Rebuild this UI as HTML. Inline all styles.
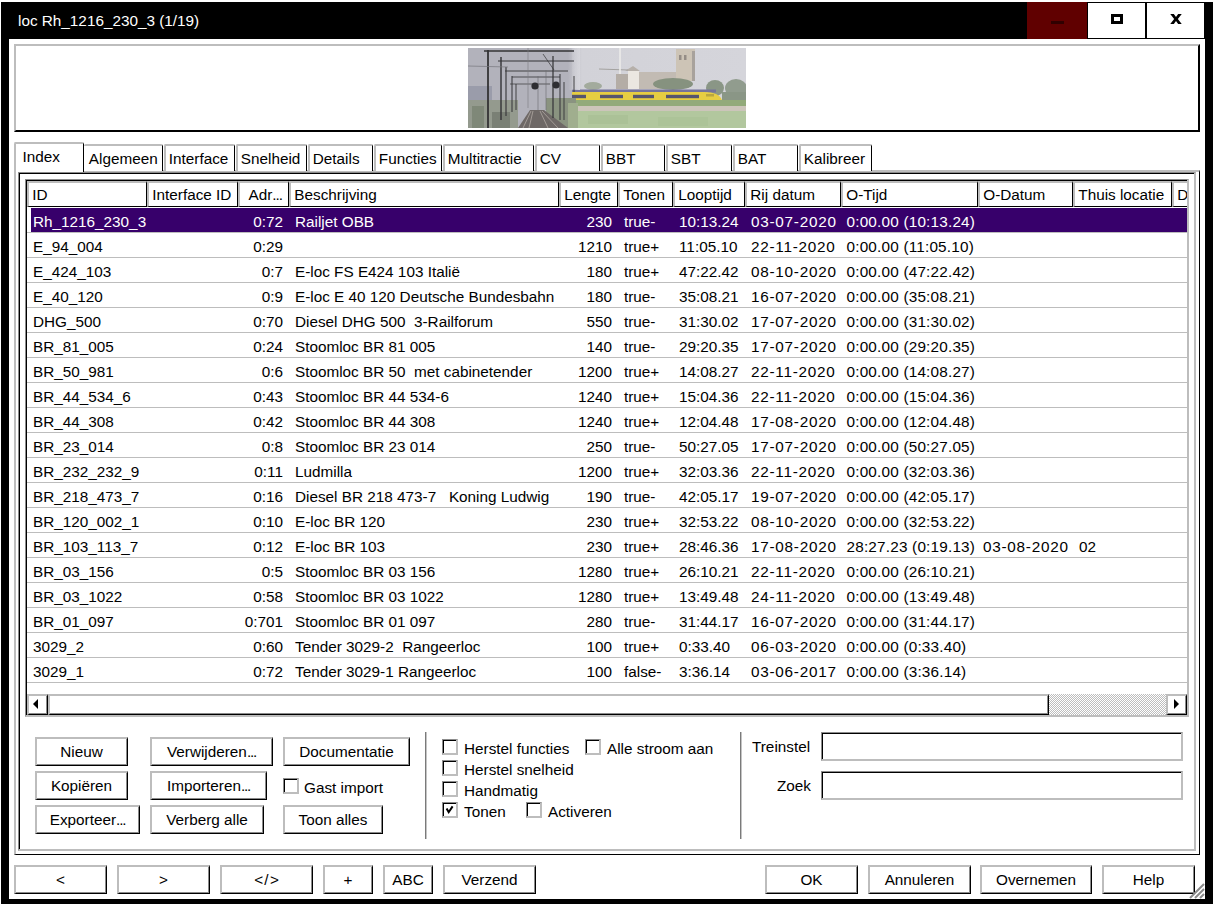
<!DOCTYPE html>
<html><head><meta charset="utf-8"><style>
html,body{margin:0;padding:0;width:1213px;height:904px;overflow:hidden;background:#fff;position:relative}
div{position:absolute}
.t{font-family:"Liberation Sans",sans-serif;font-size:15.3px;line-height:18px;white-space:pre;color:#000}
</style></head><body>
<div style="left:0px;top:0px;width:1213px;height:2px;background:#fff"></div>
<div style="left:1px;top:2px;width:1212px;height:902px;background:#000"></div>
<div style="left:9px;top:39px;width:1196px;height:860px;background:#fff"></div>
<div class="t" style="left:18px;top:12.2px;color:#fff;">loc Rh_1216_230_3 (1/19)</div>
<div style="left:1027px;top:2px;width:60px;height:37px;background:#600000"></div>
<div style="left:1051px;top:21px;width:13px;height:3px;background:#300000"></div>
<div style="left:1087px;top:2px;width:59px;height:37px;background:#fff;border:1px solid #000;box-sizing:border-box"></div>
<div style="left:1111px;top:14px;width:12px;height:10px;border:3px solid #000;box-sizing:border-box"></div>
<div style="left:1146px;top:2px;width:59px;height:37px;background:#fff;border:1px solid #000;box-sizing:border-box"></div>
<svg style="position:absolute;left:1169.7px;top:13.9px" width="12" height="10" viewBox="0 0 11.5 10"><path d="M0 0 L3.6 0 L5.75 3 L7.9 0 L11.5 0 L7.6 5 L11.5 10 L7.9 10 L5.75 7 L3.6 10 L0 10 L3.9 5Z" fill="#000"/></svg>
<div style="left:14px;top:44px;width:1186px;height:88px;border-top:2px solid #bdbdbd;border-left:2px solid #bdbdbd;border-right:2px solid #000;border-bottom:2px solid #000;box-sizing:border-box"></div>
<div style="left:468px;top:48px;width:278px;height:80px;overflow:hidden"><svg width="278" height="80" viewBox="0 0 278 80" style="display:block">
<defs>
<linearGradient id="sk" x1="0" x2="1" y1="0" y2="0"><stop offset="0" stop-color="#adadb5"/><stop offset="0.36" stop-color="#b3b3bb"/><stop offset="0.41" stop-color="#d2d2d8"/><stop offset="1" stop-color="#d5d5db"/></linearGradient>
<linearGradient id="fade" x1="0" x2="1" y1="0" y2="0"><stop offset="0" stop-color="#d5d5db" stop-opacity="0"/><stop offset="1" stop-color="#d5d5db" stop-opacity="1"/></linearGradient>
<filter id="bl" x="-5%" y="-5%" width="110%" height="110%"><feGaussianBlur stdDeviation="0.7"/></filter>
</defs>
<rect width="278" height="80" fill="url(#sk)"/>
<g filter="url(#bl)">
<!-- right scene -->
<rect x="170" y="24" width="40" height="17" fill="#c2bbb3"/>
<rect x="208" y="1" width="19" height="32" fill="#cdc4b6"/>
<rect x="211" y="7" width="2.5" height="5" fill="#958d86"/><rect x="216" y="7" width="2.5" height="5" fill="#958d86"/>
<rect x="224" y="3" width="3" height="30" fill="#a8a29c"/>
<rect x="160" y="23" width="11" height="18" fill="#ebe7e1"/>
<path d="M157 23 L165 18 L172 23Z" fill="#b6b0aa"/>
<path d="M131 21 L160 22" stroke="#a3a19f" stroke-width="1"/>
<path d="M152 0 L152 28" stroke="#ecebea" stroke-width="1.6"/>
<rect x="148" y="26" width="12" height="15" fill="#b4ada6"/>
<ellipse cx="205" cy="36" rx="20" ry="6" fill="#86927f"/>
<ellipse cx="247" cy="40" rx="9" ry="8" fill="#8a9686"/>
<ellipse cx="268" cy="40" rx="11" ry="9" fill="#919c8e"/>
<ellipse cx="125" cy="38" rx="9" ry="4" fill="#a3ab9d"/>
<!-- train -->
<rect x="96" y="41.5" width="152" height="3" fill="#74739a"/>
<path d="M96 44 L236 44 Q251 44 254 52 L96 52Z" fill="#e6cd42"/>
<rect x="96" y="46.8" width="22" height="3.4" fill="#55546e"/>
<rect x="132" y="46.8" width="23" height="3.4" fill="#55546e"/>
<rect x="165" y="46.8" width="21" height="3.4" fill="#55546e"/>
<rect x="198" y="46.8" width="33" height="3.4" fill="#55546e"/>
<rect x="238" y="46" width="8" height="2.5" fill="#b9a640"/>
<rect x="254" y="44" width="24" height="9" fill="#8a9686"/>
<!-- fields -->
<rect x="96" y="52" width="182" height="6" fill="#92aa7a"/>
<rect x="96" y="58" width="182" height="5" fill="#ccc5ba"/>
<rect x="96" y="63" width="182" height="17" fill="#b2c79e"/>
<rect x="120" y="67" width="40" height="9" fill="#a6bd92" opacity="0.6"/>
<rect x="190" y="69" width="50" height="9" fill="#a8bf94" opacity="0.6"/>
<!-- left railway part -->
<rect x="0" y="0" width="104" height="80" fill="#b2b2bb"/>
<rect x="100" y="0" width="12" height="42" fill="url(#fade)"/>
<rect x="0" y="38" width="24" height="14" fill="#9a9caa"/>
<rect x="0" y="52" width="50" height="28" fill="#949a8e"/>
<rect x="4" y="58" width="12" height="22" fill="#7f8878"/>
<rect x="24" y="64" width="18" height="16" fill="#7a8074"/>
<rect x="78" y="50" width="30" height="30" fill="#8a9380"/>
<rect x="100" y="55" width="10" height="25" fill="#a0ae8e"/>
<path d="M50 80 L62 62 L76 62 L100 80Z" fill="#6e6866"/>
<path d="M55 80 L63 63 M61 80 L65 63 M80 80 L72 63 M90 80 L74 63" stroke="#b0a8a2" stroke-width="0.8"/>
<g stroke="#333336" fill="none">
<path d="M20 2 L20 80" stroke-width="1.8"/>
<path d="M33 9 L33 72" stroke-width="1.4"/>
<path d="M38 19 L38 68" stroke-width="1.1"/>
<path d="M44 28 L44 64" stroke-width="1"/>
<path d="M48 36 L48 62" stroke-width="0.9"/>
<path d="M85 8 L85 70" stroke-width="1.2"/>
<path d="M92 26 L92 72" stroke-width="1"/>
<path d="M96 34 L96 72" stroke-width="0.9"/>
<path d="M106 28 L106 44" stroke-width="0.9"/>
<path d="M16 3 L106 3" stroke-width="1.4"/>
<path d="M30 13 L106 13" stroke-width="1.2"/>
<path d="M37 23 L100 23" stroke-width="0.9"/>
<path d="M44 29 L92 29" stroke-width="0.8"/>
<path d="M42 36 L82 36" stroke-width="0.7"/>
<path d="M75 6 L86 22" stroke-width="0.7"/>
<path d="M60 0 L60 60" stroke-width="0.6" stroke="#7a7a80"/>
<path d="M70 28 L70 62 M78 22 L78 62" stroke-width="0.6" stroke="#6a6a70"/>
</g>
<path d="M0 18 L40 19" stroke="#75757c" stroke-width="0.7"/>
<circle cx="67" cy="38" r="3.6" fill="#2e2e30"/>
<circle cx="88" cy="37" r="3.6" fill="#2e2e30"/>
</g>
</svg>
</div>
<div style="left:14px;top:170px;width:1186px;height:685px;border-top:2px solid #bdbdbd;border-left:2px solid #bdbdbd;border-right:1px solid #000;border-bottom:1px solid #000;box-sizing:border-box"></div>
<div style="left:18px;top:172px;width:1178px;height:679px;border-top:1px solid #8c8c8c;border-left:1px solid #8c8c8c;border-right:2px solid #bdbdbd;border-bottom:2px solid #bdbdbd;box-sizing:border-box;box-shadow:inset 1px 1px 0 #000;"></div>
<div style="left:84px;top:144px;width:79px;height:27px;border-top:2px solid #bdbdbd;border-left:0px solid #bdbdbd;border-right:1px solid #000;box-sizing:border-box;border-top-left-radius:2px;border-top-right-radius:2px;background:#fff"></div>
<div class="t" style="left:88.8px;top:149.8px;">Algemeen</div>
<div style="left:164px;top:144px;width:71px;height:27px;border-top:2px solid #bdbdbd;border-left:2px solid #bdbdbd;border-right:1px solid #000;box-sizing:border-box;border-top-left-radius:2px;border-top-right-radius:2px;background:#fff"></div>
<div class="t" style="left:168.8px;top:149.8px;">Interface</div>
<div style="left:236px;top:144px;width:71px;height:27px;border-top:2px solid #bdbdbd;border-left:2px solid #bdbdbd;border-right:1px solid #000;box-sizing:border-box;border-top-left-radius:2px;border-top-right-radius:2px;background:#fff"></div>
<div class="t" style="left:240.8px;top:149.8px;">Snelheid</div>
<div style="left:308px;top:144px;width:65px;height:27px;border-top:2px solid #bdbdbd;border-left:2px solid #bdbdbd;border-right:1px solid #000;box-sizing:border-box;border-top-left-radius:2px;border-top-right-radius:2px;background:#fff"></div>
<div class="t" style="left:312.8px;top:149.8px;">Details</div>
<div style="left:374px;top:144px;width:68px;height:27px;border-top:2px solid #bdbdbd;border-left:2px solid #bdbdbd;border-right:1px solid #000;box-sizing:border-box;border-top-left-radius:2px;border-top-right-radius:2px;background:#fff"></div>
<div class="t" style="left:378.8px;top:149.8px;">Functies</div>
<div style="left:443px;top:144px;width:91px;height:27px;border-top:2px solid #bdbdbd;border-left:2px solid #bdbdbd;border-right:1px solid #000;box-sizing:border-box;border-top-left-radius:2px;border-top-right-radius:2px;background:#fff"></div>
<div class="t" style="left:447.8px;top:149.8px;">Multitractie</div>
<div style="left:535px;top:144px;width:65px;height:27px;border-top:2px solid #bdbdbd;border-left:2px solid #bdbdbd;border-right:1px solid #000;box-sizing:border-box;border-top-left-radius:2px;border-top-right-radius:2px;background:#fff"></div>
<div class="t" style="left:539.8px;top:149.8px;">CV</div>
<div style="left:601px;top:144px;width:64px;height:27px;border-top:2px solid #bdbdbd;border-left:2px solid #bdbdbd;border-right:1px solid #000;box-sizing:border-box;border-top-left-radius:2px;border-top-right-radius:2px;background:#fff"></div>
<div class="t" style="left:605.8px;top:149.8px;">BBT</div>
<div style="left:666px;top:144px;width:66px;height:27px;border-top:2px solid #bdbdbd;border-left:2px solid #bdbdbd;border-right:1px solid #000;box-sizing:border-box;border-top-left-radius:2px;border-top-right-radius:2px;background:#fff"></div>
<div class="t" style="left:670.8px;top:149.8px;">SBT</div>
<div style="left:733px;top:144px;width:65px;height:27px;border-top:2px solid #bdbdbd;border-left:2px solid #bdbdbd;border-right:1px solid #000;box-sizing:border-box;border-top-left-radius:2px;border-top-right-radius:2px;background:#fff"></div>
<div class="t" style="left:737.8px;top:149.8px;">BAT</div>
<div style="left:799px;top:144px;width:73px;height:27px;border-top:2px solid #bdbdbd;border-left:2px solid #bdbdbd;border-right:1px solid #000;box-sizing:border-box;border-top-left-radius:2px;border-top-right-radius:2px;background:#fff"></div>
<div class="t" style="left:803.8px;top:149.8px;">Kalibreer</div>
<div style="left:14px;top:142px;width:70px;height:30px;border-top:2px solid #bdbdbd;border-left:2px solid #bdbdbd;border-right:1px solid #000;box-sizing:border-box;border-top-left-radius:2px;border-top-right-radius:2px;background:#fff"></div>
<div class="t" style="left:22.5px;top:148px;">Index</div>
<div style="left:25px;top:179px;width:1164px;height:538px;border-top:1px solid #8c8c8c;border-left:1px solid #8c8c8c;border-right:2px solid #bdbdbd;border-bottom:2px solid #bdbdbd;box-sizing:border-box;box-shadow:inset 1px 1px 0 #000;background:#fff;"></div>
<div style="left:27px;top:181px;width:1160px;height:27px;overflow:hidden">
<div style="left:0px;top:0px;width:120px;height:26px;border-top:2px solid #bdbdbd;border-left:2px solid #bdbdbd;border-right:1px solid #000;border-bottom:1px solid #000;box-sizing:border-box;background:#fff"></div>
<div class="t" style="left:5.3px;top:5px">ID</div>
<div style="left:120px;top:0px;width:91px;height:26px;border-top:2px solid #bdbdbd;border-left:2px solid #bdbdbd;border-right:1px solid #000;border-bottom:1px solid #000;box-sizing:border-box;background:#fff"></div>
<div class="t" style="left:125.3px;top:5px">Interface ID</div>
<div style="left:211px;top:0px;width:51px;height:26px;border-top:2px solid #bdbdbd;border-left:2px solid #bdbdbd;border-right:1px solid #000;border-bottom:1px solid #000;box-sizing:border-box;background:#fff"></div>
<div class="t" style="left:221.5px;top:5px">Adr<span style="letter-spacing:-1px">...</span></div>
<div style="left:262px;top:0px;width:270px;height:26px;border-top:2px solid #bdbdbd;border-left:2px solid #bdbdbd;border-right:1px solid #000;border-bottom:1px solid #000;box-sizing:border-box;background:#fff"></div>
<div class="t" style="left:267.3px;top:5px">Beschrijving</div>
<div style="left:532px;top:0px;width:59px;height:26px;border-top:2px solid #bdbdbd;border-left:2px solid #bdbdbd;border-right:1px solid #000;border-bottom:1px solid #000;box-sizing:border-box;background:#fff"></div>
<div class="t" style="left:537.3px;top:5px">Lengte</div>
<div style="left:591px;top:0px;width:55px;height:26px;border-top:2px solid #bdbdbd;border-left:2px solid #bdbdbd;border-right:1px solid #000;border-bottom:1px solid #000;box-sizing:border-box;background:#fff"></div>
<div class="t" style="left:596.3px;top:5px">Tonen</div>
<div style="left:646px;top:0px;width:72px;height:26px;border-top:2px solid #bdbdbd;border-left:2px solid #bdbdbd;border-right:1px solid #000;border-bottom:1px solid #000;box-sizing:border-box;background:#fff"></div>
<div class="t" style="left:651.3px;top:5px">Looptijd</div>
<div style="left:718px;top:0px;width:96px;height:26px;border-top:2px solid #bdbdbd;border-left:2px solid #bdbdbd;border-right:1px solid #000;border-bottom:1px solid #000;box-sizing:border-box;background:#fff"></div>
<div class="t" style="left:723.3px;top:5px">Rij datum</div>
<div style="left:814px;top:0px;width:137px;height:26px;border-top:2px solid #bdbdbd;border-left:2px solid #bdbdbd;border-right:1px solid #000;border-bottom:1px solid #000;box-sizing:border-box;background:#fff"></div>
<div class="t" style="left:819.3px;top:5px">O-Tijd</div>
<div style="left:951px;top:0px;width:95px;height:26px;border-top:2px solid #bdbdbd;border-left:2px solid #bdbdbd;border-right:1px solid #000;border-bottom:1px solid #000;box-sizing:border-box;background:#fff"></div>
<div class="t" style="left:956.3px;top:5px">O-Datum</div>
<div style="left:1046px;top:0px;width:99px;height:26px;border-top:2px solid #bdbdbd;border-left:2px solid #bdbdbd;border-right:1px solid #000;border-bottom:1px solid #000;box-sizing:border-box;background:#fff"></div>
<div class="t" style="left:1051.3px;top:5px">Thuis locatie</div>
<div style="left:1145px;top:0px;width:30px;height:26px;border-top:2px solid #bdbdbd;border-left:2px solid #bdbdbd;border-right:1px solid #000;border-bottom:1px solid #000;box-sizing:border-box;background:#fff"></div>
<div class="t" style="left:1150.3px;top:5px">D</div>
</div>
<div style="left:31px;top:208px;width:1156px;height:24px;background:#37006b"></div>
<div style="left:27px;top:232px;width:1160px;height:1px;background:#bdbdbd"></div>
<div class="t" style="left:33px;top:212.5px;color:#fff;">Rh_1216_230_3</div>
<div class="t" style="right:930px;top:212.5px;color:#fff;">0:72</div>
<div class="t" style="left:295px;top:212.5px;color:#fff;">Railjet OBB</div>
<div class="t" style="right:601px;top:212.5px;color:#fff;">230</div>
<div class="t" style="left:624px;top:212.5px;color:#fff;">true-</div>
<div class="t" style="left:679px;top:212.5px;color:#fff;">10:13.24</div>
<div class="t" style="left:751px;top:212.5px;color:#fff;letter-spacing:0.75px;">03-07-2020</div>
<div class="t" style="left:846.5px;top:212.5px;color:#fff;letter-spacing:0.2px;">0:00.00 (10:13.24)</div>
<div style="left:27px;top:257px;width:1160px;height:1px;background:#bdbdbd"></div>
<div class="t" style="left:33px;top:237.5px;">E_94_004</div>
<div class="t" style="right:930px;top:237.5px;">0:29</div>
<div class="t" style="left:295px;top:237.5px;"></div>
<div class="t" style="right:601px;top:237.5px;">1210</div>
<div class="t" style="left:624px;top:237.5px;">true+</div>
<div class="t" style="left:679px;top:237.5px;">11:05.10</div>
<div class="t" style="left:751px;top:237.5px;letter-spacing:0.75px;">22-11-2020</div>
<div class="t" style="left:846.5px;top:237.5px;letter-spacing:0.2px;">0:00.00 (11:05.10)</div>
<div style="left:27px;top:282px;width:1160px;height:1px;background:#bdbdbd"></div>
<div class="t" style="left:33px;top:262.5px;">E_424_103</div>
<div class="t" style="right:930px;top:262.5px;">0:7</div>
<div class="t" style="left:295px;top:262.5px;">E-loc FS E424 103 Italië</div>
<div class="t" style="right:601px;top:262.5px;">180</div>
<div class="t" style="left:624px;top:262.5px;">true+</div>
<div class="t" style="left:679px;top:262.5px;">47:22.42</div>
<div class="t" style="left:751px;top:262.5px;letter-spacing:0.75px;">08-10-2020</div>
<div class="t" style="left:846.5px;top:262.5px;letter-spacing:0.2px;">0:00.00 (47:22.42)</div>
<div style="left:27px;top:307px;width:1160px;height:1px;background:#bdbdbd"></div>
<div class="t" style="left:33px;top:287.5px;">E_40_120</div>
<div class="t" style="right:930px;top:287.5px;">0:9</div>
<div class="t" style="left:295px;top:287.5px;">E-loc E 40 120 Deutsche Bundesbahn</div>
<div class="t" style="right:601px;top:287.5px;">180</div>
<div class="t" style="left:624px;top:287.5px;">true-</div>
<div class="t" style="left:679px;top:287.5px;">35:08.21</div>
<div class="t" style="left:751px;top:287.5px;letter-spacing:0.75px;">16-07-2020</div>
<div class="t" style="left:846.5px;top:287.5px;letter-spacing:0.2px;">0:00.00 (35:08.21)</div>
<div style="left:27px;top:332px;width:1160px;height:1px;background:#bdbdbd"></div>
<div class="t" style="left:33px;top:312.5px;">DHG_500</div>
<div class="t" style="right:930px;top:312.5px;">0:70</div>
<div class="t" style="left:295px;top:312.5px;">Diesel DHG 500  3-Railforum</div>
<div class="t" style="right:601px;top:312.5px;">550</div>
<div class="t" style="left:624px;top:312.5px;">true-</div>
<div class="t" style="left:679px;top:312.5px;">31:30.02</div>
<div class="t" style="left:751px;top:312.5px;letter-spacing:0.75px;">17-07-2020</div>
<div class="t" style="left:846.5px;top:312.5px;letter-spacing:0.2px;">0:00.00 (31:30.02)</div>
<div style="left:27px;top:357px;width:1160px;height:1px;background:#bdbdbd"></div>
<div class="t" style="left:33px;top:337.5px;">BR_81_005</div>
<div class="t" style="right:930px;top:337.5px;">0:24</div>
<div class="t" style="left:295px;top:337.5px;">Stoomloc BR 81 005</div>
<div class="t" style="right:601px;top:337.5px;">140</div>
<div class="t" style="left:624px;top:337.5px;">true-</div>
<div class="t" style="left:679px;top:337.5px;">29:20.35</div>
<div class="t" style="left:751px;top:337.5px;letter-spacing:0.75px;">17-07-2020</div>
<div class="t" style="left:846.5px;top:337.5px;letter-spacing:0.2px;">0:00.00 (29:20.35)</div>
<div style="left:27px;top:382px;width:1160px;height:1px;background:#bdbdbd"></div>
<div class="t" style="left:33px;top:362.5px;">BR_50_981</div>
<div class="t" style="right:930px;top:362.5px;">0:6</div>
<div class="t" style="left:295px;top:362.5px;">Stoomloc BR 50  met cabinetender</div>
<div class="t" style="right:601px;top:362.5px;">1200</div>
<div class="t" style="left:624px;top:362.5px;">true+</div>
<div class="t" style="left:679px;top:362.5px;">14:08.27</div>
<div class="t" style="left:751px;top:362.5px;letter-spacing:0.75px;">22-11-2020</div>
<div class="t" style="left:846.5px;top:362.5px;letter-spacing:0.2px;">0:00.00 (14:08.27)</div>
<div style="left:27px;top:407px;width:1160px;height:1px;background:#bdbdbd"></div>
<div class="t" style="left:33px;top:387.5px;">BR_44_534_6</div>
<div class="t" style="right:930px;top:387.5px;">0:43</div>
<div class="t" style="left:295px;top:387.5px;">Stoomloc BR 44 534-6</div>
<div class="t" style="right:601px;top:387.5px;">1240</div>
<div class="t" style="left:624px;top:387.5px;">true+</div>
<div class="t" style="left:679px;top:387.5px;">15:04.36</div>
<div class="t" style="left:751px;top:387.5px;letter-spacing:0.75px;">22-11-2020</div>
<div class="t" style="left:846.5px;top:387.5px;letter-spacing:0.2px;">0:00.00 (15:04.36)</div>
<div style="left:27px;top:432px;width:1160px;height:1px;background:#bdbdbd"></div>
<div class="t" style="left:33px;top:412.5px;">BR_44_308</div>
<div class="t" style="right:930px;top:412.5px;">0:42</div>
<div class="t" style="left:295px;top:412.5px;">Stoomloc BR 44 308</div>
<div class="t" style="right:601px;top:412.5px;">1240</div>
<div class="t" style="left:624px;top:412.5px;">true+</div>
<div class="t" style="left:679px;top:412.5px;">12:04.48</div>
<div class="t" style="left:751px;top:412.5px;letter-spacing:0.75px;">17-08-2020</div>
<div class="t" style="left:846.5px;top:412.5px;letter-spacing:0.2px;">0:00.00 (12:04.48)</div>
<div style="left:27px;top:457px;width:1160px;height:1px;background:#bdbdbd"></div>
<div class="t" style="left:33px;top:437.5px;">BR_23_014</div>
<div class="t" style="right:930px;top:437.5px;">0:8</div>
<div class="t" style="left:295px;top:437.5px;">Stoomloc BR 23 014</div>
<div class="t" style="right:601px;top:437.5px;">250</div>
<div class="t" style="left:624px;top:437.5px;">true-</div>
<div class="t" style="left:679px;top:437.5px;">50:27.05</div>
<div class="t" style="left:751px;top:437.5px;letter-spacing:0.75px;">17-07-2020</div>
<div class="t" style="left:846.5px;top:437.5px;letter-spacing:0.2px;">0:00.00 (50:27.05)</div>
<div style="left:27px;top:482px;width:1160px;height:1px;background:#bdbdbd"></div>
<div class="t" style="left:33px;top:462.5px;">BR_232_232_9</div>
<div class="t" style="right:930px;top:462.5px;">0:11</div>
<div class="t" style="left:295px;top:462.5px;">Ludmilla</div>
<div class="t" style="right:601px;top:462.5px;">1200</div>
<div class="t" style="left:624px;top:462.5px;">true+</div>
<div class="t" style="left:679px;top:462.5px;">32:03.36</div>
<div class="t" style="left:751px;top:462.5px;letter-spacing:0.75px;">22-11-2020</div>
<div class="t" style="left:846.5px;top:462.5px;letter-spacing:0.2px;">0:00.00 (32:03.36)</div>
<div style="left:27px;top:507px;width:1160px;height:1px;background:#bdbdbd"></div>
<div class="t" style="left:33px;top:487.5px;">BR_218_473_7</div>
<div class="t" style="right:930px;top:487.5px;">0:16</div>
<div class="t" style="left:295px;top:487.5px;">Diesel BR 218 473-7   Koning Ludwig</div>
<div class="t" style="right:601px;top:487.5px;">190</div>
<div class="t" style="left:624px;top:487.5px;">true-</div>
<div class="t" style="left:679px;top:487.5px;">42:05.17</div>
<div class="t" style="left:751px;top:487.5px;letter-spacing:0.75px;">19-07-2020</div>
<div class="t" style="left:846.5px;top:487.5px;letter-spacing:0.2px;">0:00.00 (42:05.17)</div>
<div style="left:27px;top:532px;width:1160px;height:1px;background:#bdbdbd"></div>
<div class="t" style="left:33px;top:512.5px;">BR_120_002_1</div>
<div class="t" style="right:930px;top:512.5px;">0:10</div>
<div class="t" style="left:295px;top:512.5px;">E-loc BR 120</div>
<div class="t" style="right:601px;top:512.5px;">230</div>
<div class="t" style="left:624px;top:512.5px;">true+</div>
<div class="t" style="left:679px;top:512.5px;">32:53.22</div>
<div class="t" style="left:751px;top:512.5px;letter-spacing:0.75px;">08-10-2020</div>
<div class="t" style="left:846.5px;top:512.5px;letter-spacing:0.2px;">0:00.00 (32:53.22)</div>
<div style="left:27px;top:557px;width:1160px;height:1px;background:#bdbdbd"></div>
<div class="t" style="left:33px;top:537.5px;">BR_103_113_7</div>
<div class="t" style="right:930px;top:537.5px;">0:12</div>
<div class="t" style="left:295px;top:537.5px;">E-loc BR 103</div>
<div class="t" style="right:601px;top:537.5px;">230</div>
<div class="t" style="left:624px;top:537.5px;">true+</div>
<div class="t" style="left:679px;top:537.5px;">28:46.36</div>
<div class="t" style="left:751px;top:537.5px;letter-spacing:0.75px;">17-08-2020</div>
<div class="t" style="left:846.5px;top:537.5px;letter-spacing:0.2px;">28:27.23 (0:19.13)</div>
<div class="t" style="left:983px;top:537.5px;letter-spacing:0.75px;">03-08-2020</div>
<div class="t" style="left:1079px;top:537.5px;">02</div>
<div style="left:27px;top:582px;width:1160px;height:1px;background:#bdbdbd"></div>
<div class="t" style="left:33px;top:562.5px;">BR_03_156</div>
<div class="t" style="right:930px;top:562.5px;">0:5</div>
<div class="t" style="left:295px;top:562.5px;">Stoomloc BR 03 156</div>
<div class="t" style="right:601px;top:562.5px;">1280</div>
<div class="t" style="left:624px;top:562.5px;">true+</div>
<div class="t" style="left:679px;top:562.5px;">26:10.21</div>
<div class="t" style="left:751px;top:562.5px;letter-spacing:0.75px;">22-11-2020</div>
<div class="t" style="left:846.5px;top:562.5px;letter-spacing:0.2px;">0:00.00 (26:10.21)</div>
<div style="left:27px;top:607px;width:1160px;height:1px;background:#bdbdbd"></div>
<div class="t" style="left:33px;top:587.5px;">BR_03_1022</div>
<div class="t" style="right:930px;top:587.5px;">0:58</div>
<div class="t" style="left:295px;top:587.5px;">Stoomloc BR 03 1022</div>
<div class="t" style="right:601px;top:587.5px;">1280</div>
<div class="t" style="left:624px;top:587.5px;">true+</div>
<div class="t" style="left:679px;top:587.5px;">13:49.48</div>
<div class="t" style="left:751px;top:587.5px;letter-spacing:0.75px;">24-11-2020</div>
<div class="t" style="left:846.5px;top:587.5px;letter-spacing:0.2px;">0:00.00 (13:49.48)</div>
<div style="left:27px;top:632px;width:1160px;height:1px;background:#bdbdbd"></div>
<div class="t" style="left:33px;top:612.5px;">BR_01_097</div>
<div class="t" style="right:930px;top:612.5px;">0:701</div>
<div class="t" style="left:295px;top:612.5px;">Stoomloc BR 01 097</div>
<div class="t" style="right:601px;top:612.5px;">280</div>
<div class="t" style="left:624px;top:612.5px;">true-</div>
<div class="t" style="left:679px;top:612.5px;">31:44.17</div>
<div class="t" style="left:751px;top:612.5px;letter-spacing:0.75px;">16-07-2020</div>
<div class="t" style="left:846.5px;top:612.5px;letter-spacing:0.2px;">0:00.00 (31:44.17)</div>
<div style="left:27px;top:657px;width:1160px;height:1px;background:#bdbdbd"></div>
<div class="t" style="left:33px;top:637.5px;">3029_2</div>
<div class="t" style="right:930px;top:637.5px;">0:60</div>
<div class="t" style="left:295px;top:637.5px;">Tender 3029-2  Rangeerloc</div>
<div class="t" style="right:601px;top:637.5px;">100</div>
<div class="t" style="left:624px;top:637.5px;">true+</div>
<div class="t" style="left:679px;top:637.5px;">0:33.40</div>
<div class="t" style="left:751px;top:637.5px;letter-spacing:0.75px;">06-03-2020</div>
<div class="t" style="left:846.5px;top:637.5px;letter-spacing:0.2px;">0:00.00 (0:33.40)</div>
<div style="left:27px;top:682px;width:1160px;height:1px;background:#bdbdbd"></div>
<div class="t" style="left:33px;top:662.5px;">3029_1</div>
<div class="t" style="right:930px;top:662.5px;">0:72</div>
<div class="t" style="left:295px;top:662.5px;">Tender 3029-1 Rangeerloc</div>
<div class="t" style="right:601px;top:662.5px;">100</div>
<div class="t" style="left:624px;top:662.5px;">false-</div>
<div class="t" style="left:679px;top:662.5px;">3:36.14</div>
<div class="t" style="left:751px;top:662.5px;letter-spacing:0.75px;">03-06-2017</div>
<div class="t" style="left:846.5px;top:662.5px;letter-spacing:0.2px;">0:00.00 (3:36.14)</div>
<div style="left:27px;top:694px;width:1160px;height:21px;background:#fff"></div>
<div style="left:27px;top:694px;width:21px;height:21px;border-top:2px solid #bdbdbd;border-left:2px solid #bdbdbd;border-right:1px solid #000;border-bottom:1px solid #000;box-sizing:border-box;box-shadow:inset -1px -1px 0 #8a8a8a;"></div>
<svg style="position:absolute;left:33px;top:699px" width="6" height="10"><path d="M5 0 L0 5 L5 10Z" fill="#000"/></svg>
<div style="left:48px;top:694px;width:1001px;height:21px;border-top:2px solid #bdbdbd;border-left:2px solid #bdbdbd;border-right:1px solid #000;border-bottom:1px solid #000;box-sizing:border-box;box-shadow:inset -1px -1px 0 #8a8a8a;"></div>
<div style="left:1049px;top:694px;width:117px;height:21px;background-color:#d0d0d0;background-image:repeating-conic-gradient(#fff 0 25%, #bdbdbd 0 50%);background-size:2px 2px"></div>
<div style="left:1166px;top:694px;width:21px;height:21px;border-top:2px solid #bdbdbd;border-left:2px solid #bdbdbd;border-right:1px solid #000;border-bottom:1px solid #000;box-sizing:border-box;box-shadow:inset -1px -1px 0 #8a8a8a;"></div>
<svg style="position:absolute;left:1174px;top:699px" width="6" height="10"><path d="M0 0 L5 5 L0 10Z" fill="#000"/></svg>
<div style="left:35px;top:737px;width:93px;height:29px;border-top:2px solid #bdbdbd;border-left:2px solid #bdbdbd;border-right:1px solid #000;border-bottom:1px solid #000;box-sizing:border-box;box-shadow:inset -1px -1px 0 #8a8a8a;"></div>
<div class="t" style="left:35px;width:93px;text-align:center;top:742.5px;">Nieuw</div>
<div style="left:35px;top:771px;width:93px;height:29px;border-top:2px solid #bdbdbd;border-left:2px solid #bdbdbd;border-right:1px solid #000;border-bottom:1px solid #000;box-sizing:border-box;box-shadow:inset -1px -1px 0 #8a8a8a;"></div>
<div class="t" style="left:35px;width:93px;text-align:center;top:776.5px;">Kopiëren</div>
<div style="left:35px;top:805px;width:105px;height:29px;border-top:2px solid #bdbdbd;border-left:2px solid #bdbdbd;border-right:1px solid #000;border-bottom:1px solid #000;box-sizing:border-box;box-shadow:inset -1px -1px 0 #8a8a8a;"></div>
<div class="t" style="left:35px;width:105px;text-align:center;top:810.5px;">Exporteer<span style="letter-spacing:-1.2px">...</span></div>
<div style="left:150px;top:737px;width:123px;height:29px;border-top:2px solid #bdbdbd;border-left:2px solid #bdbdbd;border-right:1px solid #000;border-bottom:1px solid #000;box-sizing:border-box;box-shadow:inset -1px -1px 0 #8a8a8a;"></div>
<div class="t" style="left:150px;width:123px;text-align:center;top:742.5px;">Verwijderen<span style="letter-spacing:-1.2px">...</span></div>
<div style="left:150px;top:771px;width:117px;height:29px;border-top:2px solid #bdbdbd;border-left:2px solid #bdbdbd;border-right:1px solid #000;border-bottom:1px solid #000;box-sizing:border-box;box-shadow:inset -1px -1px 0 #8a8a8a;"></div>
<div class="t" style="left:150px;width:117px;text-align:center;top:776.5px;">Importeren<span style="letter-spacing:-1.2px">...</span></div>
<div style="left:150px;top:805px;width:114px;height:29px;border-top:2px solid #bdbdbd;border-left:2px solid #bdbdbd;border-right:1px solid #000;border-bottom:1px solid #000;box-sizing:border-box;box-shadow:inset -1px -1px 0 #8a8a8a;"></div>
<div class="t" style="left:150px;width:114px;text-align:center;top:810.5px;">Verberg alle</div>
<div style="left:283px;top:737px;width:127px;height:29px;border-top:2px solid #bdbdbd;border-left:2px solid #bdbdbd;border-right:1px solid #000;border-bottom:1px solid #000;box-sizing:border-box;box-shadow:inset -1px -1px 0 #8a8a8a;"></div>
<div class="t" style="left:283px;width:127px;text-align:center;top:742.5px;">Documentatie</div>
<div style="left:283px;top:805px;width:100px;height:29px;border-top:2px solid #bdbdbd;border-left:2px solid #bdbdbd;border-right:1px solid #000;border-bottom:1px solid #000;box-sizing:border-box;box-shadow:inset -1px -1px 0 #8a8a8a;"></div>
<div class="t" style="left:283px;width:100px;text-align:center;top:810.5px;">Toon alles</div>
<div style="left:283px;top:778px;width:16px;height:16px;border-top:1px solid #8c8c8c;border-left:1px solid #8c8c8c;border-right:2px solid #bdbdbd;border-bottom:2px solid #bdbdbd;box-sizing:border-box;background:#fff;box-shadow:inset 1px 1px 0 #000"></div>
<div class="t" style="left:304px;top:778.5px;">Gast import</div>
<div style="left:425px;top:732px;width:1px;height:107px;background:#7a7a7a;box-shadow:1px 0 0 #c4c4c4"></div>
<div style="left:740px;top:732px;width:1px;height:107px;background:#7a7a7a;box-shadow:1px 0 0 #c4c4c4"></div>
<div style="left:442px;top:739px;width:16px;height:16px;border-top:1px solid #8c8c8c;border-left:1px solid #8c8c8c;border-right:2px solid #bdbdbd;border-bottom:2px solid #bdbdbd;box-sizing:border-box;background:#fff;box-shadow:inset 1px 1px 0 #000"></div>
<div class="t" style="left:464px;top:739.5px;">Herstel functies</div>
<div style="left:585px;top:739px;width:16px;height:16px;border-top:1px solid #8c8c8c;border-left:1px solid #8c8c8c;border-right:2px solid #bdbdbd;border-bottom:2px solid #bdbdbd;box-sizing:border-box;background:#fff;box-shadow:inset 1px 1px 0 #000"></div>
<div class="t" style="left:607px;top:739.5px;">Alle stroom aan</div>
<div style="left:442px;top:760px;width:16px;height:16px;border-top:1px solid #8c8c8c;border-left:1px solid #8c8c8c;border-right:2px solid #bdbdbd;border-bottom:2px solid #bdbdbd;box-sizing:border-box;background:#fff;box-shadow:inset 1px 1px 0 #000"></div>
<div class="t" style="left:464px;top:760.5px;">Herstel snelheid</div>
<div style="left:442px;top:781px;width:16px;height:16px;border-top:1px solid #8c8c8c;border-left:1px solid #8c8c8c;border-right:2px solid #bdbdbd;border-bottom:2px solid #bdbdbd;box-sizing:border-box;background:#fff;box-shadow:inset 1px 1px 0 #000"></div>
<div class="t" style="left:464px;top:781.5px;">Handmatig</div>
<div style="left:442px;top:802px;width:16px;height:16px;border-top:1px solid #8c8c8c;border-left:1px solid #8c8c8c;border-right:2px solid #bdbdbd;border-bottom:2px solid #bdbdbd;box-sizing:border-box;background:#fff;box-shadow:inset 1px 1px 0 #000"></div>
<svg style="position:absolute;left:444px;top:804px" width="12" height="12"><path d="M2.6 4.4 L4.7 8.2 L8.6 2.4" stroke="#000" stroke-width="2" fill="none"/></svg>
<div class="t" style="left:464px;top:802.5px;">Tonen</div>
<div style="left:526px;top:802px;width:16px;height:16px;border-top:1px solid #8c8c8c;border-left:1px solid #8c8c8c;border-right:2px solid #bdbdbd;border-bottom:2px solid #bdbdbd;box-sizing:border-box;background:#fff;box-shadow:inset 1px 1px 0 #000"></div>
<div class="t" style="left:548px;top:802.5px;">Activeren</div>
<div class="t" style="left:752px;top:738px;">Treinstel</div>
<div class="t" style="left:777px;top:777px;">Zoek</div>
<div style="left:821px;top:732px;width:362px;height:29px;border-top:1px solid #8c8c8c;border-left:1px solid #8c8c8c;border-right:2px solid #bdbdbd;border-bottom:2px solid #bdbdbd;box-sizing:border-box;box-shadow:inset 1px 1px 0 #000;"></div>
<div style="left:821px;top:771px;width:362px;height:29px;border-top:1px solid #8c8c8c;border-left:1px solid #8c8c8c;border-right:2px solid #bdbdbd;border-bottom:2px solid #bdbdbd;box-sizing:border-box;box-shadow:inset 1px 1px 0 #000;"></div>
<div style="left:14px;top:865px;width:93px;height:29px;border-top:2px solid #bdbdbd;border-left:2px solid #bdbdbd;border-right:1px solid #000;border-bottom:1px solid #000;box-sizing:border-box;box-shadow:inset -1px -1px 0 #8a8a8a;"></div>
<div class="t" style="left:14px;width:93px;text-align:center;top:870.5px;">&lt;</div>
<div style="left:117px;top:865px;width:93px;height:29px;border-top:2px solid #bdbdbd;border-left:2px solid #bdbdbd;border-right:1px solid #000;border-bottom:1px solid #000;box-sizing:border-box;box-shadow:inset -1px -1px 0 #8a8a8a;"></div>
<div class="t" style="left:117px;width:93px;text-align:center;top:870.5px;">&gt;</div>
<div style="left:220px;top:865px;width:93px;height:29px;border-top:2px solid #bdbdbd;border-left:2px solid #bdbdbd;border-right:1px solid #000;border-bottom:1px solid #000;box-sizing:border-box;box-shadow:inset -1px -1px 0 #8a8a8a;"></div>
<div class="t" style="left:220px;width:93px;text-align:center;top:870.5px;">&lt;&#8202;/&#8202;&gt;</div>
<div style="left:323px;top:865px;width:50px;height:29px;border-top:2px solid #bdbdbd;border-left:2px solid #bdbdbd;border-right:1px solid #000;border-bottom:1px solid #000;box-sizing:border-box;box-shadow:inset -1px -1px 0 #8a8a8a;"></div>
<div class="t" style="left:323px;width:50px;text-align:center;top:870.5px;">+</div>
<div style="left:383px;top:865px;width:50px;height:29px;border-top:2px solid #bdbdbd;border-left:2px solid #bdbdbd;border-right:1px solid #000;border-bottom:1px solid #000;box-sizing:border-box;box-shadow:inset -1px -1px 0 #8a8a8a;"></div>
<div class="t" style="left:383px;width:50px;text-align:center;top:870.5px;">ABC</div>
<div style="left:443px;top:865px;width:93px;height:29px;border-top:2px solid #bdbdbd;border-left:2px solid #bdbdbd;border-right:1px solid #000;border-bottom:1px solid #000;box-sizing:border-box;box-shadow:inset -1px -1px 0 #8a8a8a;"></div>
<div class="t" style="left:443px;width:93px;text-align:center;top:870.5px;">Verzend</div>
<div style="left:765px;top:865px;width:93px;height:29px;border-top:2px solid #bdbdbd;border-left:2px solid #bdbdbd;border-right:1px solid #000;border-bottom:1px solid #000;box-sizing:border-box;box-shadow:inset -1px -1px 0 #8a8a8a;"></div>
<div class="t" style="left:765px;width:93px;text-align:center;top:870.5px;">OK</div>
<div style="left:868px;top:865px;width:103px;height:29px;border-top:2px solid #bdbdbd;border-left:2px solid #bdbdbd;border-right:1px solid #000;border-bottom:1px solid #000;box-sizing:border-box;box-shadow:inset -1px -1px 0 #8a8a8a;"></div>
<div class="t" style="left:868px;width:103px;text-align:center;top:870.5px;">Annuleren</div>
<div style="left:980px;top:865px;width:112px;height:29px;border-top:2px solid #bdbdbd;border-left:2px solid #bdbdbd;border-right:1px solid #000;border-bottom:1px solid #000;box-sizing:border-box;box-shadow:inset -1px -1px 0 #8a8a8a;"></div>
<div class="t" style="left:980px;width:112px;text-align:center;top:870.5px;">Overnemen</div>
<div style="left:1102px;top:865px;width:93px;height:29px;border-top:2px solid #bdbdbd;border-left:2px solid #bdbdbd;border-right:1px solid #000;border-bottom:1px solid #000;box-sizing:border-box;box-shadow:inset -1px -1px 0 #8a8a8a;"></div>
<div class="t" style="left:1102px;width:93px;text-align:center;top:870.5px;">Help</div>
<svg style="position:absolute;left:1189px;top:883px" width="16" height="16"><path d="M15 1 L1 15 M15 6 L6 15 M15 11 L11 15" stroke="#8a8a8a" stroke-width="2"/></svg>
</body></html>
